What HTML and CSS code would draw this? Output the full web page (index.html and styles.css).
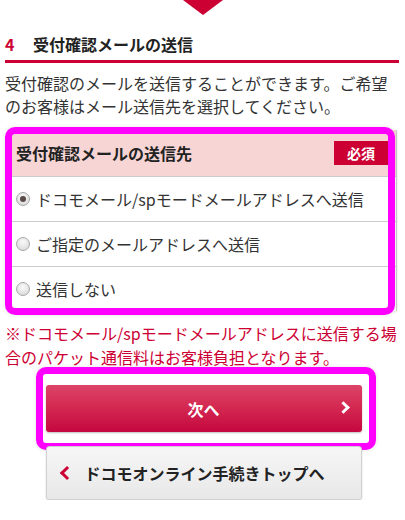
FILE: index.html
```html
<!DOCTYPE html>
<html lang="ja">
<head>
    <meta charset="UTF-8">
    <meta name="viewport" content="width=device-width, initial-scale=1.0">
    <title>受付確認メールの送信</title>
    <link rel="stylesheet" href="styles.css">
</head>
<body>
    <div class="step-arrow"></div>

    <h2 class="section-title"><span class="step-num">4</span>受付確認メールの送信</h2>
    <p class="lead">受付確認のメールを送信することができます。ご希望のお客様はメール送信先を選択してください。</p>

    <div class="form-wrap">
        <div class="form-table">
            <div class="form-head">
                <span>受付確認メールの送信先</span>
                <span class="required">必須</span>
            </div>
            <label class="form-row">
                <span class="radio checked"></span>ドコモメール/spモードメールアドレスへ送信
            </label>
            <label class="form-row">
                <span class="radio"></span>ご指定のメールアドレスへ送信
            </label>
            <label class="form-row">
                <span class="radio"></span>送信しない
            </label>
        </div>
        <!-- annotation frame -->
        <div class="mark mark-table"></div>
    </div>

    <p class="note">※ドコモメール/spモードメールアドレスに送信する場合のパケット通信料はお客様負担となります。</p>

    <div class="btn-area">
        <div class="btn-wrap">
            <button class="btn-next">次へ<span class="chev-right"></span></button>
            <div class="mark mark-btn"></div>
        </div>
        <button class="btn-back"><span class="chev-left"></span>ドコモオンライン手続きトップへ</button>
    </div>
</body>
</html>
```

FILE: styles.css
```css
body {
    margin: 0;
    font-family: "Noto Sans CJK JP", "Noto Sans", sans-serif;
    font-size: 16px;
    color: #333;
    background: #fff;
    width: 405px;
}

.step-arrow {
    width: 0;
    height: 0;
    margin: 0 auto;
    border-left: 20px solid transparent;
    border-right: 20px solid transparent;
    border-top: 15px solid #cc0033;
}

.section-title {
    margin: 0 6px 0 5px;
    padding: 18px 0 5px;
    font-size: 16px;
    line-height: 22px;
    font-weight: bold;
    color: #222;
    border-bottom: 3px solid #cc0033;
}

.step-num {
    color: #cc0033;
    display: inline-block;
    width: 28px;
}

.lead {
    margin: 9px 10px 0 5px;
    line-height: 23px;
}

.form-wrap {
    position: relative;
    margin: 12px 8px 0 8px;
}

.form-table {
    border-right: 1px solid #ccc;
    box-shadow: 0 1px 2px rgba(0, 0, 0, 0.1);
}

.form-head {
    display: flex;
    align-items: center;
    justify-content: space-between;
    height: 46px;
    padding: 0 8px;
    background: #f7d5d5;
    font-weight: bold;
    color: #222;
    border-bottom: 1px solid #ccc;
}

.required {
    background: #cc0033;
    color: #fff;
    font-size: 14px;
    font-weight: bold;
    width: 54px;
    height: 24px;
    line-height: 24px;
    text-align: center;
}

.form-row {
    display: flex;
    align-items: center;
    height: 44px;
    padding: 0 8px;
    border-bottom: 1px solid #ccc;
    color: #333;
}

.form-row:last-child {
    border-bottom: none;
}

.radio {
    width: 12px;
    height: 12px;
    border: 1px solid #a8a8a8;
    border-radius: 50%;
    background: radial-gradient(circle at 50% 35%, #fafafa, #d4d4d4);
    margin-right: 6px;
    position: relative;
}

.radio.checked::after {
    content: "";
    position: absolute;
    left: 3px;
    top: 3px;
    width: 6px;
    height: 6px;
    border-radius: 50%;
    background: #5a4a48;
}

.mark {
    position: absolute;
    border: 7px solid #ff00ff;
    border-radius: 10px;
    box-shadow: 0 0 4px rgba(0, 0, 0, 0.12);
    pointer-events: none;
}

.mark-table {
    top: -3px;
    left: -3px;
    right: 2px;
    bottom: -4px;
}

.note {
    margin: 10px 2px 0 5px;
    line-height: 24px;
    color: #cc0033;
}

.btn-area {
    display: flex;
    flex-direction: column;
    align-items: center;
    margin-top: 16px;
    padding-left: 2px;
}

.btn-wrap {
    position: relative;
}

.mark-btn {
    top: -18px;
    left: -10px;
    right: -14px;
    bottom: -18px;
}

.btn-next,
.btn-back {
    display: flex;
    align-items: center;
    width: 316px;
    font-family: inherit;
    font-size: 16px;
    font-weight: bold;
    border-radius: 3px;
    cursor: pointer;
    position: relative;
}

.btn-next {
    justify-content: center;
    height: 47px;
    border: none;
    color: #fff;
    background: linear-gradient(#dd4468, #d42a52 45%, #c5073f);
    box-shadow: 0 1px 2px rgba(0, 0, 0, 0.25);
}

.chev-right {
    position: absolute;
    right: 14px;
    top: 18px;
    width: 6px;
    height: 6px;
    border-top: 3px solid #fff;
    border-right: 3px solid #fff;
    transform: rotate(45deg);
}

.btn-back {
    height: 54px;
    margin-top: 14px;
    padding: 0 0 0 38px;
    color: #222;
    border: 1px solid #d0d0d0;
    background: linear-gradient(#f6f6f6, #e8e8e8);
    box-shadow: 0 1px 2px rgba(0, 0, 0, 0.15);
}

.chev-left {
    position: absolute;
    left: 15px;
    top: 21px;
    width: 7px;
    height: 7px;
    border-bottom: 3px solid #cc0033;
    border-left: 3px solid #cc0033;
    transform: rotate(45deg);
}
```
